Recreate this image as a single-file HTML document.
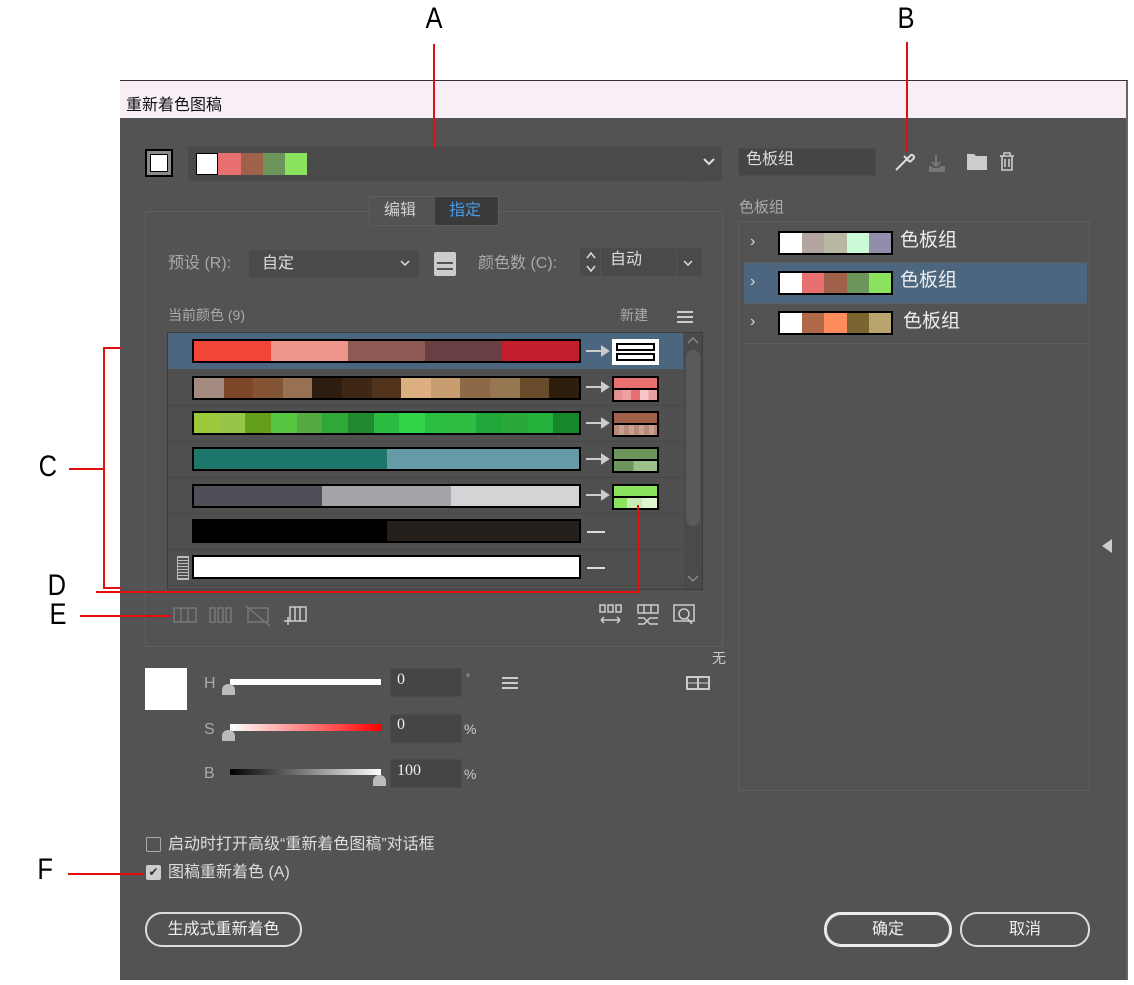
<!DOCTYPE html>
<html><head><meta charset="utf-8"><style>
*{box-sizing:border-box;margin:0;padding:0}
body{width:1134px;height:985px;background:#fff;position:relative;overflow:hidden;font-family:"Liberation Sans","Noto Sans CJK SC",sans-serif;}
.a{position:absolute}
.t{position:absolute;color:#cfcfcf;font-size:16px;white-space:nowrap;line-height:1}
.lbl{position:absolute;font-size:30px;color:#000;font-family:"Liberation Sans",sans-serif;line-height:1;transform:scaleX(.85)}
.red{position:absolute;background:#e01010}
.bar{position:absolute;left:192px;width:389px;height:24px;border:2px solid #000;display:flex}
.bar div{flex:1}
.sw{position:absolute;left:612px;width:47px;height:26px;border:2px solid #000;background:#000;display:flex;flex-direction:column;gap:2px}
.sw div{flex:1}
.box{position:absolute;background:#444;border:1px solid #4c4c4c}
.strip{position:absolute;width:115px;height:24px;border:2px solid #000;display:flex}
.strip div{flex:1}
</style></head><body>
<div class="lbl" style="left:424px;top:4px">A</div>
<div class="lbl" style="left:896px;top:4px">B</div>
<div class="lbl" style="left:37px;top:452px">C</div>
<div class="lbl" style="left:46px;top:571px">D</div>
<div class="lbl" style="left:48px;top:600px">E</div>
<div class="lbl" style="left:36px;top:855px">F</div>

<div class="a" style="left:120px;top:80px;width:1008px;height:900px;background:#535353;border-top:1px solid #333;border-right:2px solid #666"></div>
<div class="a" style="left:120px;top:81px;width:1006px;height:37px;background:#f8eef6"></div>
<div class="a" style="left:126px;top:91px;font-size:16px;color:#111">重新着色图稿</div>

<div class="a" style="left:145px;top:149px;width:28px;height:28px;border:2px solid #000;background:#8a8a8a"></div>
<div class="a" style="left:150px;top:154px;width:18px;height:18px;background:#fff;border:1px solid #000"></div>
<div class="box" style="left:188px;top:146px;width:508px;height:35px;background:#4a4a4a"></div>
<div class="a" style="left:196px;top:153px;width:22px;height:22px;background:#fff;border:1px solid #000"></div>
<div class="a" style="left:218px;top:153px;width:23px;height:22px;background:#e87071"></div>
<div class="a" style="left:241px;top:153px;width:22px;height:22px;background:#a0614b"></div>
<div class="a" style="left:263px;top:153px;width:22px;height:22px;background:#6b955a"></div>
<div class="a" style="left:285px;top:153px;width:22px;height:22px;background:#8be25d"></div>
<div class="box" style="left:696px;top:146px;width:26px;height:35px;background:#4a4a4a"></div>
<svg class="a" style="left:703px;top:158px" width="12" height="8"><path d="M1 1 L6 6 L11 1" stroke="#ddd" stroke-width="2" fill="none"/></svg>

<div class="a" style="left:145px;top:211px;width:578px;height:436px;border:1px solid #5e5e5e"></div>
<div class="a" style="left:369px;top:196px;width:130px;height:30px;background:#535353;border:1px solid #5e5e5e"></div>
<div class="t" style="left:384px;top:203px">编辑</div>
<div class="a" style="left:435px;top:197px;width:63px;height:28px;background:#3a3a3a"></div>
<div class="t" style="left:449px;top:203px;color:#4a9ae6">指定</div>

<div class="t" style="left:168px;top:256px;color:#aaa">预设 (R):</div>
<div class="box" style="left:249px;top:250px;width:170px;height:28px;background:#4a4a4a"></div>
<div class="t" style="left:262px;top:256px;color:#ddd">自定</div>
<svg class="a" style="left:400px;top:260px" width="10" height="6"><path d="M1 1 L5 5 L9 1" stroke="#ddd" stroke-width="1.5" fill="none"/></svg>
<div class="a" style="left:434px;top:252px;width:22px;height:24px;background:#ccc;border-radius:2px"></div>
<div class="a" style="left:437px;top:262px;width:16px;height:2px;background:#555"></div>
<div class="a" style="left:437px;top:268px;width:16px;height:2px;background:#555"></div>
<div class="t" style="left:478px;top:256px;color:#aaa">颜色数 (C):</div>
<div class="box" style="left:580px;top:248px;width:122px;height:28px;background:#4a4a4a"></div>
<svg class="a" style="left:585px;top:250px" width="12" height="24"><path d="M2 8 L6 3 L10 8 M2 16 L6 21 L10 16" stroke="#ddd" stroke-width="1.5" fill="none"/></svg>
<div class="a" style="left:600px;top:249px;width:1px;height:26px;background:#555"></div>
<div class="t" style="left:610px;top:252px;color:#ddd">自动</div>
<div class="a" style="left:676px;top:249px;width:1px;height:26px;background:#555"></div>
<svg class="a" style="left:683px;top:260px" width="10" height="6"><path d="M1 1 L5 5 L9 1" stroke="#ddd" stroke-width="1.5" fill="none"/></svg>

<div class="t" style="left:168px;top:308px;color:#aaa;font-size:14px">当前颜色 (9)</div>
<div class="t" style="left:620px;top:308px;color:#aaa;font-size:14px">新建</div>
<div class="a" style="left:677px;top:311px;width:16px;height:2px;background:#ccc;box-shadow:0 5px #ccc,0 10px #ccc"></div>

<div class="a" style="left:167px;top:332px;width:536px;height:258px;background:#4f4f4f;border:1px solid #3c3c3c"></div>
<div class="a" style="left:168px;top:333px;width:515px;height:36px;background:#4d6680"></div>
<div class="a" style="left:684px;top:333px;width:18px;height:256px;background:#4a4a4a"></div>
<div class="a" style="left:686px;top:350px;width:14px;height:176px;background:#5a5a5a;border-radius:7px"></div>
<svg class="a" style="left:687px;top:337px" width="12" height="8"><path d="M1 6 L6 1 L11 6" stroke="#888" stroke-width="1.5" fill="none"/></svg>
<svg class="a" style="left:687px;top:575px" width="12" height="8"><path d="M1 1 L6 6 L11 1" stroke="#888" stroke-width="1.5" fill="none"/></svg>
<div class="a" style="left:168px;top:405px;width:515px;height:1px;background:#474747;box-shadow:0 36px #474747,0 72px #474747,0 108px #474747,0 144px #474747,0 180px #474747"></div>

<div class="bar" style="top:339px"><div style="background:#f04537"></div><div style="background:#ef958c"></div><div style="background:#8c5953"></div><div style="background:#683f42"></div><div style="background:#c11f2d"></div></div>
<div class="bar" style="top:376px"><div style="background:#a38b80"></div><div style="background:#7c4728"></div><div style="background:#835434"></div><div style="background:#987153"></div><div style="background:#2f1e10"></div><div style="background:#3e2714"></div><div style="background:#51331c"></div><div style="background:#dcaf80"></div><div style="background:#c89d70"></div><div style="background:#8c6a48"></div><div style="background:#967752"></div><div style="background:#684c2c"></div><div style="background:#2e1e0e"></div></div>
<div class="bar" style="top:411px"><div style="background:#9bc939"></div><div style="background:#95c64a"></div><div style="background:#629e1a"></div><div style="background:#56c53f"></div><div style="background:#55ab3f"></div><div style="background:#2ea838"></div><div style="background:#228a2e"></div><div style="background:#2bbd42"></div><div style="background:#33d548"></div><div style="background:#2cbe40"></div><div style="background:#2fbd44"></div><div style="background:#20a83a"></div><div style="background:#2aa93a"></div><div style="background:#25b23c"></div><div style="background:#14882a"></div></div>
<div class="bar" style="top:447px"><div style="background:#1c766a"></div><div style="background:#669aa6"></div></div>
<div class="bar" style="top:484px"><div style="background:#504e56"></div><div style="background:#a4a5a9"></div><div style="background:#d3d4d6"></div></div>
<div class="bar" style="top:519px;background:#000"><div style="background:#000"></div><div style="background:#25201c"></div></div>
<div class="bar" style="top:555px;background:#fff"></div>
<div class="a" style="left:177px;top:556px;width:12px;height:24px;border:1px solid #bbb;background:repeating-linear-gradient(#bbb 0 1px,#4f4f4f 1px 3px)"></div>

<svg class="a" style="left:586px;top:344px" width="24" height="164"><g stroke="#ccc" stroke-width="2" fill="#ccc"><path d="M0 7 H18"/><path d="M16 3 L22 7 L16 11Z"/><path d="M0 43 H18"/><path d="M16 39 L22 43 L16 47Z"/><path d="M0 79 H18"/><path d="M16 75 L22 79 L16 83Z"/><path d="M0 115 H18"/><path d="M16 111 L22 115 L16 119Z"/><path d="M0 151 H18"/><path d="M16 147 L22 151 L16 155Z"/></g></svg>
<div class="a" style="left:587px;top:531px;width:18px;height:2px;background:#ddd"></div>
<div class="a" style="left:587px;top:567px;width:18px;height:2px;background:#ddd"></div>

<div class="sw" style="top:339px;border-color:#fff;background:#fff;padding:2px;gap:2px"><div style="background:#fff;border:2px solid #000"></div><div style="background:#fff;border:2px solid #000"></div></div>
<div class="sw" style="top:376px"><div style="background:#e87071"></div><div style="background:linear-gradient(90deg,#e59090 0 20%,#f0a0a0 20% 40%,#e87071 40% 60%,#f7c8c8 60% 80%,#e8a0a0 80%)"></div></div>
<div class="sw" style="top:411px"><div style="background:#a0614b"></div><div style="background:repeating-linear-gradient(90deg,#b78a7a 0 5px,#c7a090 5px 10px)"></div></div>
<div class="sw" style="top:447px"><div style="background:#6b955a"></div><div style="background:linear-gradient(90deg,#6b955a 0 45%,#9cc08a 45%)"></div></div>
<div class="sw" style="top:484px"><div style="background:#8be25d"></div><div style="background:linear-gradient(90deg,#8be25d 0 30%,#c7eeb0 30% 65%,#e0f5d0 65%)"></div></div>

<svg class="a" style="left:172px;top:602px" width="140" height="28"><g stroke="#777" fill="none" stroke-width="1.5"><rect x="2" y="6" width="22" height="14"/><path d="M9 6V20M16 6V20"/><rect x="38" y="6" width="5" height="14"/><rect x="46" y="6" width="5" height="14"/><rect x="54" y="6" width="5" height="14"/><rect x="76" y="6" width="20" height="14"/><path d="M74 4 L98 24"/></g><g stroke="#ccc" fill="none" stroke-width="1.5"><rect x="118" y="5" width="16" height="14"/><path d="M123 5V19M128 5V19M112 19H120M116 15V23"/></g></svg>
<svg class="a" style="left:598px;top:602px" width="100" height="28"><g stroke="#ccc" fill="none" stroke-width="1.5"><rect x="2" y="3" width="5" height="7"/><rect x="10" y="3" width="5" height="7"/><rect x="18" y="3" width="5" height="7"/><path d="M3 18H22M3 18L6 15M3 18L6 21M22 18L19 15M22 18L19 21"/><rect x="40" y="3" width="20" height="8"/><path d="M46 3V11M53 3V11M40 16H46L52 22H60M40 22H46L52 16H60"/><rect x="76" y="3" width="20" height="16"/><circle cx="86" cy="12" r="5"/><path d="M89 16L94 22"/></g></svg>

<div class="a" style="left:145px;top:668px;width:42px;height:42px;background:#fff"></div>
<div class="t" style="left:712px;top:651px;font-size:14px;color:#ccc">无</div>
<div class="a" style="left:686px;top:676px;width:24px;height:14px;border:2px solid #ccc;background:linear-gradient(90deg,transparent 45%,#ccc 45% 55%,transparent 55%),linear-gradient(transparent 45%,#ccc 45% 55%,transparent 55%)"></div>
<div class="t" style="left:204px;top:676px;color:#aaa">H</div>
<div class="t" style="left:204px;top:722px;color:#aaa">S</div>
<div class="t" style="left:204px;top:766px;color:#aaa">B</div>
<div class="a" style="left:230px;top:679px;width:151px;height:6px;background:#fff"></div>
<div class="a" style="left:230px;top:724px;width:151px;height:7px;background:linear-gradient(90deg,#fff,#f00)"></div>
<div class="a" style="left:230px;top:769px;width:151px;height:6px;background:linear-gradient(90deg,#000,#fff)"></div>
<div class="a" style="left:222px;top:684px;width:13px;height:11px;background:#bbb;border-radius:6px 6px 0 0"></div>
<div class="a" style="left:222px;top:730px;width:13px;height:11px;background:#bbb;border-radius:6px 6px 0 0"></div>
<div class="a" style="left:373px;top:775px;width:13px;height:11px;background:#bbb;border-radius:6px 6px 0 0"></div>
<div class="box" style="left:390px;top:668px;width:72px;height:29px;background:#454545"></div>
<div class="box" style="left:390px;top:714px;width:72px;height:29px;background:#454545"></div>
<div class="box" style="left:390px;top:759px;width:72px;height:29px;background:#454545"></div>
<div class="t" style="left:397px;top:672px;color:#eee;font-family:'Liberation Serif',serif">0</div>
<div class="t" style="left:397px;top:717px;color:#eee;font-family:'Liberation Serif',serif">0</div>
<div class="t" style="left:397px;top:763px;color:#eee;font-family:'Liberation Serif',serif">100</div>
<div class="t" style="left:466px;top:674px;font-size:10px;color:#ccc">°</div>
<div class="t" style="left:464px;top:722px;font-size:14px;color:#ccc">%</div>
<div class="t" style="left:464px;top:767px;font-size:14px;color:#ccc">%</div>
<div class="a" style="left:502px;top:677px;width:16px;height:2px;background:#ccc;box-shadow:0 5px #ccc,0 10px #ccc"></div>

<div class="box" style="left:738px;top:148px;width:138px;height:28px;background:#454545"></div>
<div class="t" style="left:746px;top:152px;color:#ddd">色板组</div>
<svg class="a" style="left:893px;top:148px" width="130" height="26"><g fill="none" stroke="#ddd" stroke-width="2"><path d="M3 22 L14 11"/><path d="M11 8 L17 14"/><path d="M14 11 L18 7 A2.5 2.5 0 0 1 21 10 L17 14"/></g><path d="M43 7V18M39 14L43 18L47 14" stroke="#777" stroke-width="2" fill="none"/><path d="M36 18V24H52V18H48L46 20H40L38 18Z" fill="#777"/><path d="M74 6H81L83 8H94V22H74Z" fill="#ccc"/><g fill="none" stroke="#ccc" stroke-width="1.6"><path d="M107 8H121M111 8V5H117V8"/><path d="M109 8V22H119V8M112 11V19M116 11V19"/></g></svg>
<div class="t" style="left:739px;top:200px;color:#aaa;font-size:15px">色板组</div>
<div class="a" style="left:738px;top:221px;width:352px;height:570px;border:1px solid #5e5e5e"></div>
<div class="a" style="left:744px;top:263px;width:343px;height:40px;background:#4d6680"></div>
<div class="a" style="left:744px;top:262px;width:343px;height:1px;background:#5e5e5e;box-shadow:0 41px #5e5e5e,0 81px #5e5e5e"></div>
<div class="t" style="left:750px;top:234px;color:#ddd">›</div>
<div class="t" style="left:750px;top:274px;color:#ddd">›</div>
<div class="t" style="left:750px;top:314px;color:#ddd">›</div>
<div class="strip" style="left:778px;top:231px"><div style="background:#fff"></div><div style="background:#b5a5a1"></div><div style="background:#b9b8a3"></div><div style="background:#cbfbd8"></div><div style="background:#928dab"></div></div>
<div class="strip" style="left:778px;top:271px"><div style="background:#fff"></div><div style="background:#e87071"></div><div style="background:#a0614b"></div><div style="background:#6b955a"></div><div style="background:#8be25d"></div></div>
<div class="strip" style="left:778px;top:311px"><div style="background:#fff"></div><div style="background:#b06848"></div><div style="background:#ff8c5c"></div><div style="background:#7a6430"></div><div style="background:#b8a66e"></div></div>
<div class="t" style="left:900px;top:231px;color:#eee;font-size:19px">色板组</div>
<div class="t" style="left:900px;top:271px;color:#eee;font-size:19px">色板组</div>
<div class="t" style="left:903px;top:312px;color:#eee;font-size:19px">色板组</div>
<div class="a" style="left:1102px;top:539px;width:0;height:0;border-top:7px solid transparent;border-bottom:7px solid transparent;border-right:10px solid #ccc"></div>

<div class="a" style="left:146px;top:837px;width:15px;height:15px;border:1px solid #aaa;border-radius:2px"></div>
<div class="t" style="left:168px;top:837px;color:#ddd">启动时打开高级“重新着色图稿”对话框</div>
<div class="a" style="left:146px;top:865px;width:15px;height:15px;background:#ccc;border-radius:2px;color:#333;font-size:12px;text-align:center;line-height:15px">✔</div>
<div class="t" style="left:168px;top:865px;color:#ddd">图稿重新着色 (A)</div>
<div class="a" style="left:145px;top:912px;width:157px;height:35px;border:2px solid #ddd;border-radius:17px;color:#eee;font-size:16px;text-align:center;line-height:31px">生成式重新着色</div>
<div class="a" style="left:824px;top:912px;width:128px;height:35px;border:2px solid #eee;border-radius:17px;color:#eee;font-size:16px;text-align:center;line-height:31px;box-shadow:inset 0 0 0 1px #eee">确定</div>
<div class="a" style="left:960px;top:912px;width:130px;height:35px;border:2px solid #ddd;border-radius:17px;color:#eee;font-size:16px;text-align:center;line-height:31px">取消</div>

<div class="red" style="left:433px;top:44px;width:2px;height:104px"></div>
<div class="red" style="left:906px;top:42px;width:2px;height:110px"></div>
<div class="red" style="left:69px;top:468px;width:34px;height:2px"></div>
<div class="red" style="left:103px;top:347px;width:2px;height:242px"></div>
<div class="red" style="left:103px;top:347px;width:18px;height:2px"></div>
<div class="red" style="left:103px;top:587px;width:18px;height:2px"></div>
<div class="red" style="left:96px;top:591px;width:543px;height:2px"></div>
<div class="red" style="left:637px;top:505px;width:2px;height:88px"></div>
<div class="red" style="left:80px;top:615px;width:92px;height:2px"></div>
<div class="red" style="left:68px;top:873px;width:76px;height:2px"></div>
</body></html>
